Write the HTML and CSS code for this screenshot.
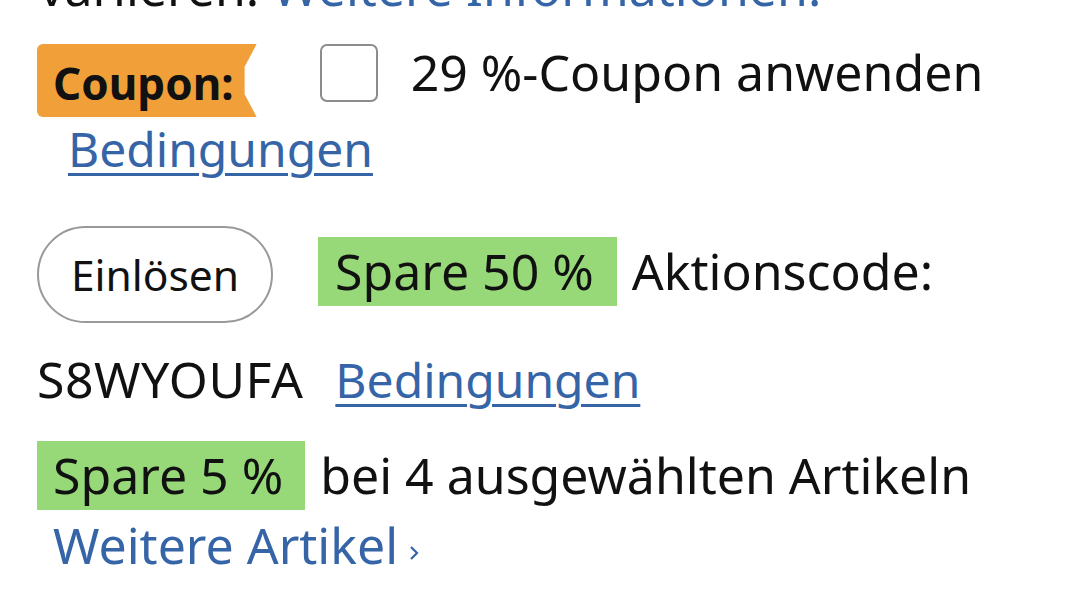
FILE: index.html
```html
<!DOCTYPE html>
<html lang="de">
<head>
    <meta charset="UTF-8">
    <title>Coupon</title>
    <link rel="stylesheet" href="styles.css">
</head>
<body>
    <div class="offers">
        <div class="intro">variieren. <a href="#">Weitere Informationen.</a></div>

        <div class="coupon-row">
            <span class="coupon-badge">Coupon:</span>
            <span class="checkbox"></span>
            <span class="coupon-text">29 %-Coupon anwenden</span>
        </div>
        <a href="#" class="terms coupon-terms">Bedingungen</a>

        <div class="promo-row">
            <button type="button" class="redeem">Einlösen</button>
            <span class="save">Spare 50 %</span>
            <span class="promo-text">Aktionscode:</span>
        </div>
        <div class="code-row">
            <span>S8WYOUFA</span>
            <a href="#" class="terms">Bedingungen</a>
        </div>

        <div class="bundle-row">
            <span class="save save-bundle">Spare 5 %</span>
            <span class="promo-text">bei 4 ausgewählten Artikeln</span>
        </div>
        <a href="#" class="more">Weitere Artikel<svg class="chevron" width="10" height="16" viewBox="0 0 10 16"><path d="M2 2 L8 8 L2 14" fill="none" stroke="#3565a7" stroke-width="2.2"/></svg></a>
    </div>
</body>
</html>
```

FILE: styles.css
```css
body {
    margin: 0;
    background-color: #ffffff;
    font-family: "Noto Sans", Arial, sans-serif;
    color: #111111;
    overflow: hidden;
}

a {
    color: #3565a7;
    text-decoration: none;
}

.offers {
    padding-left: 37px;
    font-size: 50px;
    line-height: 60px;
}

.intro {
    margin-top: -43px;
    height: 60px;
    padding-left: 2px;
    white-space: nowrap;
}

.coupon-row {
    display: flex;
    align-items: flex-start;
    height: 73px;
    margin-top: 27px;
}

.coupon-badge {
    display: flex;
    align-items: center;
    height: 73px;
    padding: 4px 23px 0 16px;
    box-sizing: border-box;
    background-color: #f19f38;
    border-radius: 6px 0 0 6px;
    font-weight: bold;
    font-size: 44px;
    clip-path: polygon(0 0, 100% 0, calc(100% - 12px) 31%, calc(100% - 12px) 69%, 100% 100%, 0 100%);
}

.checkbox {
    width: 58px;
    height: 58px;
    box-sizing: border-box;
    border: 2px solid #8c8c8c;
    border-radius: 7px;
    margin-left: 63px;
}

.coupon-text {
    margin-left: 33px;
    margin-top: -2px;
}

.terms {
    font-size: 48px;
    text-decoration: underline;
    text-decoration-thickness: 3px;
    text-underline-offset: 6px;
}

.coupon-terms {
    display: inline-block;
    margin-left: 31px;
    margin-top: 3px;
    line-height: 57px;
}

.promo-row {
    display: flex;
    align-items: flex-start;
    height: 97px;
    margin-top: 48px;
}

.redeem {
    width: 236px;
    height: 97px;
    padding: 0;
    border: 2px solid #999999;
    border-radius: 49px;
    background: #ffffff;
    font-family: inherit;
    font-size: 42.5px;
    color: #111111;
    margin-right: 45px;
}

.save {
    display: inline-block;
    background-color: #97d978;
    padding: 0 23px 0 17px;
    line-height: 69px;
    margin-right: 15px;
}

.promo-row .save,
.promo-row .promo-text {
    margin-top: 11px;
}

.promo-text {
    line-height: 69px;
}

.code-row {
    display: flex;
    align-items: baseline;
    gap: 32px;
    margin-top: 26px;
}

.code-row span {
    letter-spacing: 0.5px;
}

.bundle-row {
    display: flex;
    align-items: center;
    height: 69px;
    margin-top: 31px;
}

.save-bundle {
    padding: 0 22px 0 16px;
}

.more {
    display: inline-block;
    margin-left: 16px;
    margin-top: 5px;
}

.chevron {
    margin-left: 11px;
    vertical-align: 3px;
}
```
